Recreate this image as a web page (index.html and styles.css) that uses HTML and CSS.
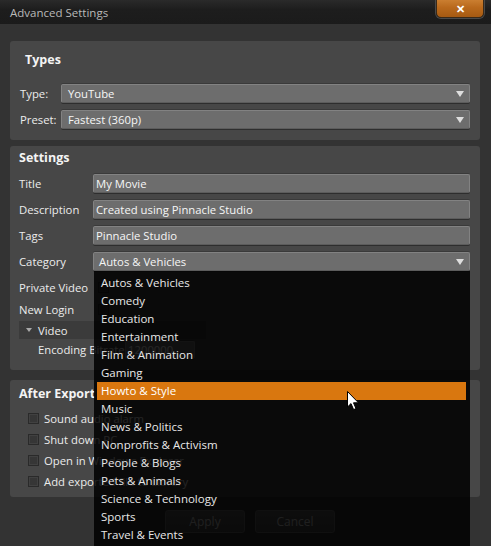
FILE: index.html
```html
<!DOCTYPE html>
<html>
<head>
  <meta charset="utf-8">
  <title>Advanced Settings</title>
  <link rel="stylesheet" href="styles.css">
</head>
<body>
  <div class="titlebar">
    <span class="title">Advanced Settings</span>
    <button class="close-btn">&#x2715;</button>
  </div>

  <div class="content">
    <section class="panel types-panel">
      <h2 class="panel-title">Types</h2>
      <div class="types-grid">
        <label>Type:</label>
        <div class="select select-wide">YouTube<span class="arrow"></span></div>
        <label>Preset:</label>
        <div class="select select-wide">Fastest (360p)<span class="arrow"></span></div>
      </div>
    </section>

    <section class="panel settings-panel">
      <h2 class="panel-title">Settings</h2>
      <div class="settings-grid">
        <label>Title</label>
        <div class="field">My Movie</div>
        <label>Description</label>
        <div class="field">Created using Pinnacle Studio</div>
        <label>Tags</label>
        <div class="field">Pinnacle Studio</div>
        <label>Category</label>
        <div class="select category">
          Autos &amp; Vehicles<span class="arrow"></span>
          <ul class="dropdown">
            <li>Autos &amp; Vehicles</li>
            <li>Comedy</li>
            <li>Education</li>
            <li>Entertainment</li>
            <li>Film &amp; Animation</li>
            <li>Gaming</li>
            <li class="hover">Howto &amp; Style</li>
            <li>Music</li>
            <li>News &amp; Politics</li>
            <li>Nonprofits &amp; Activism</li>
            <li>People &amp; Blogs</li>
            <li>Pets &amp; Animals</li>
            <li>Science &amp; Technology</li>
            <li>Sports</li>
            <li>Travel &amp; Events</li>
          </ul>
        </div>
      </div>
      <div class="check-line first-line">
        <label>Private Video</label><span class="box"></span>
      </div>
      <div class="check-line">
        <label>New Login</label><span class="box"></span>
      </div>
      <div class="group-row"><span class="tri"></span>Video</div>
      <div class="sub-row">
        <label>Encoding Bitrate</label>
        <div class="field small-field">1200000</div>
      </div>
    </section>

    <section class="panel after-panel">
      <h2 class="panel-title">After Export</h2>
      <div class="check-row"><span class="box"></span>Sound audio alarm</div>
      <div class="check-row"><span class="box"></span>Shut down PC</div>
      <div class="check-row"><span class="box"></span>Open in Windows Explorer</div>
      <div class="check-row"><span class="box"></span>Add exported file to Library</div>
    </section>

    <div class="buttons">
      <button class="dlg-btn">Apply</button>
      <button class="dlg-btn">Cancel</button>
    </div>
  </div>

  <svg class="cursor" width="13" height="20" viewBox="0 0 13 20">
    <path d="M0.5 0.5 L0.5 16 L4 12.6 L6.6 18.6 L9 17.6 L6.5 11.8 L11.5 11.8 Z" fill="#fff" stroke="#000" stroke-width="1"/>
  </svg>
</body>
</html>
```

FILE: styles.css
```css
html, body {
  margin: 0;
  padding: 0;
}

body {
  width: 491px;
  height: 546px;
  overflow: hidden;
  position: relative;
  background-color: #333333;
  color: #ececec;
  font-family: "Open Sans", "Noto Sans", sans-serif;
  font-size: 11.3px;
}

.titlebar {
  height: 24px;
  position: relative;
  background: linear-gradient(#2a2a2a, #1d1d1d 40%, #1b1b1b);
}

.title {
  display: block;
  padding-left: 10px;
  line-height: 25px;
  font-size: 11.5px;
  color: #b9b9b9;
}

.close-btn {
  position: absolute;
  top: -3px;
  right: 7px;
  width: 48px;
  height: 21px;
  padding: 2px 0 0;
  border: 1px solid #3b2a18;
  border-radius: 0 0 5px 5px;
  background: linear-gradient(#cf8436, #b9691c 50%, #a65a12);
  color: #fff;
  font-size: 11px;
  font-weight: bold;
  line-height: 16px;
  box-shadow: 0 0 0 1px #4a4a4a;
}

.content {
  padding: 17px 11px 0 10px;
}

.panel {
  background-color: #474747;
  border-radius: 3px;
}

.panel-title {
  margin: 0;
  font-size: 12.5px;
  font-weight: bold;
  line-height: 18px;
  color: #f4f4f4;
}

.types-panel {
  padding: 10px 10px 11px 10px;
}

.types-panel .panel-title {
  padding-left: 5px;
  margin-bottom: 15px;
}

.types-grid {
  display: grid;
  grid-template-columns: 41px 1fr;
  row-gap: 7px;
  align-items: center;
}

.settings-panel {
  margin-top: 6px;
  padding: 3px 10px 10px 9px;
}

.settings-panel .panel-title {
  margin-bottom: 7px;
}

.settings-grid {
  display: grid;
  grid-template-columns: 74px 1fr;
  row-gap: 7px;
  align-items: center;
}

label {
  white-space: nowrap;
}

.select, .field {
  position: relative;
  height: 17px;
  line-height: 17px;
  background-color: #6d6d6d;
  border: 1px solid #828282;
  border-bottom-color: #5c5c5c;
  border-radius: 2px;
  box-shadow: 0 1px 0 #2e2e2e, 0 -1px 0 #3a3a3a;
  color: #f6f6f6;
  white-space: nowrap;
}

.select-wide {
  padding-left: 6px;
}

.field {
  padding-left: 2px;
}

.category {
  padding-left: 5px;
}

.arrow {
  position: absolute;
  right: 5px;
  top: 6px;
  width: 0;
  height: 0;
  border-left: 4px solid transparent;
  border-right: 4px solid transparent;
  border-top: 6px solid #dedede;
}

.dropdown {
  position: absolute;
  z-index: 5;
  top: 18px;
  left: 0;
  right: -1px;
  margin: 0;
  padding: 3px 0 20px;
  list-style: none;
  background-color: rgba(0, 0, 0, 0.85);
}

.dropdown li {
  height: 18px;
  line-height: 18px;
  margin: 0 4px 0 3px;
  padding-left: 4px;
  font-size: 11.5px;
  color: #e8e8e8;
}

.dropdown li.hover {
  background-color: #d9770f;
  color: #fff;
}

.check-line {
  display: flex;
  align-items: center;
  height: 22px;
}

.check-line label {
  width: 79px;
}

.first-line {
  margin-top: 5px;
}

.box {
  display: inline-block;
  width: 9px;
  height: 9px;
  background-color: #363636;
  border: 1px solid #2a2a2a;
  box-shadow: inset 0 0 0 1px #414141;
}

.group-row {
  display: flex;
  align-items: center;
  height: 18px;
  width: 180px;
  margin-top: 1px;
  padding-left: 7px;
  background-color: #3b3b3b;
}

.tri {
  width: 0;
  height: 0;
  margin-right: 6px;
  border-left: 3.5px solid transparent;
  border-right: 3.5px solid transparent;
  border-top: 4px solid #a9a9a9;
}

.sub-row {
  display: flex;
  align-items: center;
  height: 21px;
  padding-left: 19px;
}

.sub-row label {
  width: 87px;
}

.small-field {
  width: 66px;
  height: 16px;
  line-height: 16px;
}

.after-panel {
  margin-top: 10px;
  padding: 5px 10px 5px 9px;
}

.after-panel .panel-title {
  margin-bottom: 5px;
}

.check-row {
  display: flex;
  align-items: center;
  height: 21px;
  padding-left: 9px;
}

.check-row .box {
  margin-right: 5px;
}

.buttons {
  display: flex;
  justify-content: center;
  gap: 10px;
  margin-top: 13px;
  padding-left: 10px;
}

.dlg-btn {
  width: 80px;
  height: 23px;
  border: 1px solid #6a6a6a;
  border-radius: 3px;
  background: linear-gradient(#5a5a5a, #484848);
  color: #d0d0d0;
  font-family: "Open Sans", "Noto Sans", sans-serif;
  font-size: 12px;
}

.cursor {
  position: absolute;
  left: 347px;
  top: 391px;
  z-index: 10;
}
```
